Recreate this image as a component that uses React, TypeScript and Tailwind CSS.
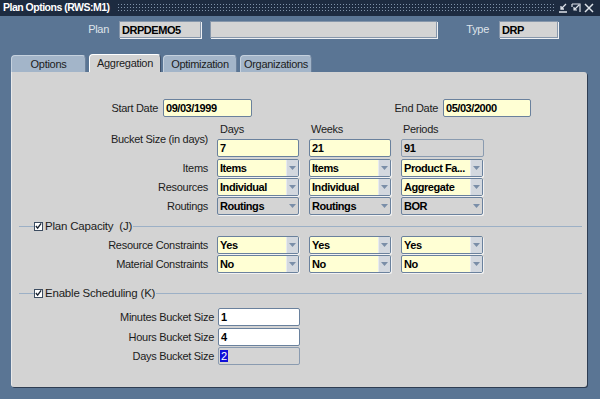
import React from "react";

const label = "text-[11px] leading-[13px] tracking-[-0.3px] text-[#1c1c1c] whitespace-nowrap";
const value = "text-[11px] font-bold leading-[16px] tracking-[-0.45px] text-black whitespace-nowrap";

function Arrow({ yellow }: { yellow?: boolean }) {
  return (
    <span
      className={
        "flex w-[12px] items-center justify-center " +
        (yellow ? "border-l border-[#e8ebef] bg-[#d3d8df]" : "")
      }
    >
      <svg width="7" height="4" viewBox="0 0 7 4">
        <path d="M0 0h7L3.5 4z" fill="#7a8ea8" />
      </svg>
    </span>
  );
}

function Select({ text, yellow }: { text: string; yellow?: boolean }) {
  return (
    <div
      className={
        "flex h-[18px] w-[82px] overflow-hidden rounded-[2px] border border-[#6a819d] shadow-[1px_1px_0_#f2f2f2] " +
        (yellow ? "bg-[#ffffd4]" : "bg-[#d4d4d4]")
      }
    >
      <span className={value + " flex-1 overflow-hidden pl-[2px]"}>{text}</span>
      <Arrow yellow={yellow} />
    </div>
  );
}

function Checkbox() {
  return (
    <span className="flex h-[9px] w-[9px] items-center justify-center border border-[#3c4c60] bg-white">
      <svg width="8" height="8" viewBox="0 0 8 8">
        <path d="M1 4l2 2.4L7 1" fill="none" stroke="#1a2433" strokeWidth="1.6" />
      </svg>
    </span>
  );
}

function Section({ title }: { title: string }) {
  return (
    <div className="flex h-[14px] items-center pl-[7px] pr-[5px]">
      <div className="h-px w-[15px] bg-[#9cb0c6]" />
      <Checkbox />
      <span className="ml-[2px] text-[11.5px] leading-[14px] tracking-[-0.2px] text-[#1c1c1c] whitespace-pre">
        {title}
      </span>
      <div className="ml-[1px] h-px flex-1 bg-[#9cb0c6]" />
    </div>
  );
}

function Row({ name, children }: { name: string; children: React.ReactNode }) {
  return (
    <div className="flex h-[18px] items-center">
      <div className={label + " w-[196px] text-right"}>{name}</div>
      <div className="ml-[9px] flex gap-[10px]">{children}</div>
    </div>
  );
}

function Tab({ text, active, w }: { text: string; active?: boolean; w: string }) {
  return (
    <div
      className={
        "flex items-center justify-center rounded-t-[4px] border-l border-t text-[11px] tracking-[-0.3px] text-[#1c1c1c] " +
        w +
        (active
          ? " h-[18px] border-white bg-[#d3d3d3] border-r border-r-[#3f5069]"
          : " h-[17px] border-[#c5d1de] bg-[#a3b5c9] border-r border-r-[#6c819b]")
      }
    >
      {text}
    </div>
  );
}

export default function App() {
  return (
    <div className="h-[399px] w-[600px] overflow-hidden bg-[#5a7594] font-['Liberation_Sans',Arial,sans-serif]">
      {/* Title bar */}
      <div className="flex h-[16px] items-center bg-[#1d2b40]">
        <span className="ml-[3px] text-[10.5px] font-bold tracking-[-0.5px] text-white">Plan Options (RWS:M1)</span>
        <div className="ml-[7px] h-[10px] flex-1 bg-[radial-gradient(#8093aa_0.8px,transparent_1px)] bg-[length:3px_3px]" />
        <div className="ml-[4px] mr-[6px] flex items-center gap-[3px]">
          <svg width="10" height="10" viewBox="0 0 10 10">
            <path d="M8 1L3 6M3 3v3h3M1 9h8" fill="none" stroke="#dde2e9" strokeWidth="1.3" />
          </svg>
          <svg width="10" height="10" viewBox="0 0 10 10">
            <path d="M1 1h8v8M8 2L3 7M3 4v3h3M1 1v3" fill="none" stroke="#dde2e9" strokeWidth="1.2" />
          </svg>
          <svg width="10" height="10" viewBox="0 0 10 10">
            <path d="M1 1l8 8M9 1l-8 8" fill="none" stroke="#dde2e9" strokeWidth="1.5" />
          </svg>
        </div>
      </div>

      {/* Plan row */}
      <div className="mt-[5px] flex h-[17px] items-center">
        <div className="w-[109px] text-right text-[11px] tracking-[-0.3px] text-[#dfe4ea]">Plan</div>
        <div className={value + " ml-[10px] h-[17px] w-[82px] border border-[#8797ab] bg-[#d4d4d4] pl-[2px] shadow-[1px_1px_0_#eef0f3]"}>DRPDEMO5</div>
        <div className="ml-[9px] h-[17px] w-[227px] border border-[#8797ab] bg-[#d4d4d4] shadow-[1px_1px_0_#eef0f3]" />
        <div className="w-[52px] text-right text-[11px] tracking-[-0.3px] text-[#dfe4ea]">Type</div>
        <div className={value + " ml-[10px] h-[17px] w-[59px] border border-[#8797ab] bg-[#d4d4d4] pl-[2px] shadow-[1px_1px_0_#eef0f3]"}>DRP</div>
      </div>

      {/* Tabs */}
      <div className="ml-[11px] mt-[16px] flex items-end">
        <Tab text="Options" w="w-[75px]" />
        <div className="w-[3px]" />
        <Tab text="Aggregation" w="w-[72px]" active />
        <div className="w-[2px]" />
        <Tab text="Optimization" w="w-[74px]" />
        <div className="w-[3px]" />
        <Tab text="Organizations" w="w-[72px]" />
      </div>

      {/* Panel */}
      <div className="ml-[11px] h-[315px] w-[576px] rounded-b-[3px] rounded-tr-[3px] border-l border-[#eaeaea] bg-[#d3d3d3] pt-[27px] shadow-[1px_1px_0_#2e3d52]">
        <div className="flex h-[18px] items-center">
          <div className={label + " w-[146px] text-right"}>Start Date</div>
          <div className={value + " ml-[5px] h-[18px] w-[89px] rounded-[2px] border border-[#6a819d] bg-[#ffffd4] pl-[2px]"}>09/03/1999</div>
          <div className={label + " w-[186px] text-right"}>End Date</div>
          <div className={value + " ml-[5px] h-[18px] w-[88px] rounded-[2px] border border-[#6a819d] bg-[#ffffd4] pl-[2px]"}>05/03/2000</div>
        </div>

        <div className="mt-px flex">
          <div className="flex w-[196px] items-center justify-end pt-[4px]">
            <span className={label}>Bucket Size (in days)</span>
          </div>
          <div className="ml-[9px] grid grid-cols-[82px_82px_83px] gap-x-[10px]">
            <div className={label + " h-[20px] pl-[3px] pt-[5px]"}>Days</div>
            <div className={label + " h-[20px] pl-[2px] pt-[5px]"}>Weeks</div>
            <div className={label + " h-[20px] pl-[2px] pt-[5px]"}>Periods</div>
            <div className={value + " mt-px h-[18px] rounded-[2px] border border-[#6a819d] bg-[#ffffd4] pl-[2px]"}>7</div>
            <div className={value + " mt-px h-[18px] rounded-[2px] border border-[#6a819d] bg-[#ffffd4] pl-[2px]"}>21</div>
            <div className={value + " mt-px h-[18px] rounded-[2px] border border-[#8a9bb0] bg-[#d4d4d4] pl-[2px]"}>91</div>
          </div>
        </div>

        <div className="mt-[2px]">
          <Row name="Items">
            <Select text="Items" yellow />
            <Select text="Items" yellow />
            <Select text="Product Fa..." yellow />
          </Row>
        </div>
        <div className="mt-px">
          <Row name="Resources">
            <Select text="Individual" yellow />
            <Select text="Individual" yellow />
            <Select text="Aggregate" yellow />
          </Row>
        </div>
        <div className="mt-px">
          <Row name="Routings">
            <Select text="Routings" />
            <Select text="Routings" />
            <Select text="BOR" />
          </Row>
        </div>

        <div className="mt-[4px]">
          <Section title="Plan Capacity  (J)" />
        </div>
        <div className="mt-[3px]">
          <Row name="Resource Constraints">
            <Select text="Yes" yellow />
            <Select text="Yes" yellow />
            <Select text="Yes" yellow />
          </Row>
        </div>
        <div className="mt-px">
          <Row name="Material Constraints">
            <Select text="No" yellow />
            <Select text="No" yellow />
            <Select text="No" yellow />
          </Row>
        </div>

        <div className="mt-[13px]">
          <Section title="Enable Scheduling (K)" />
        </div>

        <div className="mt-[8px] flex h-[18px] items-center">
          <div className={label + " w-[202px] text-right"}>Minutes Bucket Size</div>
          <div className={value + " ml-[4px] h-[18px] w-[82px] rounded-[2px] border border-[#6a819d] bg-white pl-[2px]"}>1</div>
        </div>
        <div className="mt-[2px] flex h-[18px] items-center">
          <div className={label + " w-[202px] text-right"}>Hours Bucket Size</div>
          <div className={value + " ml-[4px] h-[18px] w-[82px] rounded-[2px] border border-[#6a819d] bg-white pl-[2px]"}>4</div>
        </div>
        <div className="mt-px flex h-[18px] items-center">
          <div className={label + " w-[202px] text-right"}>Days Bucket Size</div>
          <div className={value + " ml-[4px] h-[18px] w-[82px] rounded-[2px] border border-[#8a9bb0] bg-[#d4d4d4] pl-[1px]"}>
            <span className="bg-[#1010d8] px-px font-normal text-white">2</span>
          </div>
        </div>
      </div>
    </div>
  );
}
